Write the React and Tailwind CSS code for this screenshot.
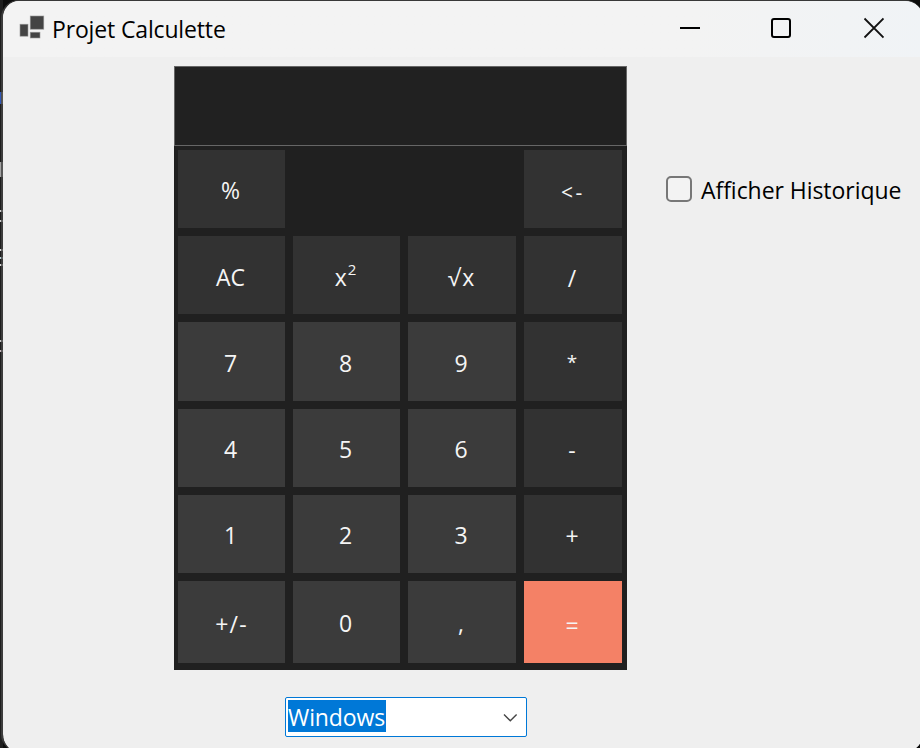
const light = 'bg-[#323232]';
const mid = 'bg-[#3b3b3b]';
const base = 'pt-[2px] pr-[2px]';
const low = 'pt-[4px] pr-[2px]';

const keys = [
  { label: '%', tone: light, text: base },
  null,
  null,
  { label: '<-', tone: light, text: 'tracking-[2.5px] text-[21px] pt-[5px]' },
  { label: 'AC', tone: light, text: low },
  { label: 'x', sup: '2', tone: light, text: low },
  { label: '√x', tone: light, text: 'tracking-[2px] pt-[3px]' },
  { label: '/', tone: light, text: 'pt-[5px] pr-[2px]' },
  { label: '7', tone: mid, text: base },
  { label: '8', tone: mid, text: base },
  { label: '9', tone: mid, text: base },
  { label: '*', tone: light, text: 'pr-[2px] text-[19px]' },
  { label: '4', tone: mid, text: base },
  { label: '5', tone: mid, text: base },
  { label: '6', tone: mid, text: base },
  { label: '-', tone: light, text: low },
  { label: '1', tone: mid, text: base },
  { label: '2', tone: mid, text: base },
  { label: '3', tone: mid, text: base },
  { label: '+', tone: light, text: low },
  { label: '+/-', tone: mid, text: 'pt-[4px] tracking-[1.2px]' },
  { label: '0', tone: mid, text: base },
  { label: ',', tone: mid, text: base },
  { label: '=', tone: 'bg-[#f48166]', text: 'pt-[5px] pr-[2px]' },
];

function Key({ item }) {
  if (!item) return <div />;
  return (
    <button className={`flex items-center justify-center leading-8 text-[#f5f5f5] ${item.tone} ${item.text}`}>
      <span>{item.label}</span>
      {item.sup && <sup className="top-0 ml-px pb-[16px] text-[15px] leading-4">{item.sup}</sup>}
    </button>
  );
}

function Backdrop() {
  return (
    <div className="flex w-[3px] flex-col bg-[#1e1e1e] pt-[92px]">
      <i className="mb-[58px] h-[12px] bg-linear-to-r from-[#3158b8] from-40% to-[#b8a47c] to-60%" />
      <i className="mb-[33px] h-[15px] bg-[#a4a4a4]" />
      <i className="mb-[8px] h-[2px] bg-[#cfcfcf]" />
      <i className="mb-[27px] h-[2px] bg-[#cfcfcf]" />
      <i className="mb-[6px] h-[2px] bg-[#d8d8d8]" />
      <i className="mb-[5px] h-[2px] bg-[#b5ccd2]" />
      <i className="mb-[74px] h-[2px] bg-[#d8d8d8]" />
      <i className="mb-[8px] h-[2px] bg-[#c6c6c6]" />
      <i className="h-[2px] bg-[#c6b8be]" />
    </div>
  );
}

function TitleBar() {
  return (
    <header className="flex h-[56px] items-start justify-between bg-linear-to-r from-[#f3f3f3] from-75% to-[#f0f3f6] pl-[16px] pr-[39px]">
      <div className="flex items-start gap-[7px]">
        <svg className="mt-[14px] h-[26px] w-[26px]" viewBox="0 0 26 26">
          <g fill="#444" stroke="#999" strokeWidth="0.6">
            <rect x="1" y="9.2" width="8" height="12" />
            <rect x="11.2" y="1" width="13.6" height="13.2" />
            <rect x="11.2" y="17.2" width="9.8" height="5.8" />
          </g>
        </svg>
        <h1 className="pt-[12px] whitespace-nowrap text-[23px] leading-8 tracking-[-0.15px] text-black">Projet Calculette</h1>
      </div>
      <div className="flex gap-[67px] pt-[16px]">
        <svg className="h-[24px] w-[24px]" viewBox="0 0 24 24" fill="none" stroke="#000" strokeWidth="2">
          <path d="M2 11H22" />
        </svg>
        <svg className="h-[24px] w-[24px]" viewBox="0 0 24 24" fill="none" stroke="#000" strokeWidth="2">
          <rect x="3" y="2" width="18" height="18" rx="2" />
        </svg>
        <svg className="h-[24px] w-[24px]" viewBox="0 0 24 24" fill="none" stroke="#111" strokeWidth="1.8">
          <path d="M4.5 1.5L23.5 20.5M23.5 1.5L4.5 20.5" />
        </svg>
      </div>
    </header>
  );
}

export default function App() {
  return (
    <div className="flex h-[748px] w-[920px] items-start overflow-hidden bg-[#0c0c0c] font-['Open_Sans','Noto_Sans',sans-serif]">
      <div className="flex h-full shrink-0">
        <Backdrop />
      </div>
      <div className="-ml-[2px] h-[752px] w-[922px] shrink-0 overflow-hidden rounded-[18px] border-l-2 border-t border-[#444]/80 bg-[#efefef] bg-clip-padding">
        <TitleBar />
        <main className="flex items-start gap-[39px] pl-[171px] pt-[9px]">
          <section className="flex w-[453px] flex-col items-center gap-[27px]">
            <div className="h-[604px] w-full bg-[#202020]">
              <div className="h-[80px] border border-[#666] bg-[#212121]" />
              <div className="grid grid-cols-[107px_107px_108px_98px] grid-rows-[78px_78px_79px_78px_78px_82px] gap-2 pl-[4px] pt-[4px] text-[23px]">
                {keys.map((item, i) => (
                  <Key key={i} item={item} />
                ))}
              </div>
            </div>
            <div className="ml-[11px] flex h-[40px] w-[242px] items-center justify-between rounded-[2px] border border-[#0078d7] bg-white pb-[2px] pl-[2px] pr-[8px]">
              <span className="flex h-[32px] w-[98px] items-center whitespace-nowrap bg-[#0078d7] pt-[2px] text-[23px] leading-8 tracking-[-0.1px] text-white">Windows</span>
              <svg className="mt-[4px] h-[10px] w-[15px]" viewBox="0 0 15 10" fill="none" stroke="#444" strokeWidth="1.4">
                <path d="M1 1.5L7.3 7.8L13.6 1.5" />
              </svg>
            </div>
          </section>
          <label className="flex items-center gap-[9px] pt-[107px]">
            <span className="mb-[2px] h-[26px] w-[26px] rounded-[5px] border-2 border-[#777] bg-[#f3f3f3]" />
            <span className="whitespace-nowrap pt-px text-[23px] leading-8 tracking-[-0.05px] text-black">Afficher Historique</span>
          </label>
        </main>
      </div>
    </div>
  );
}
